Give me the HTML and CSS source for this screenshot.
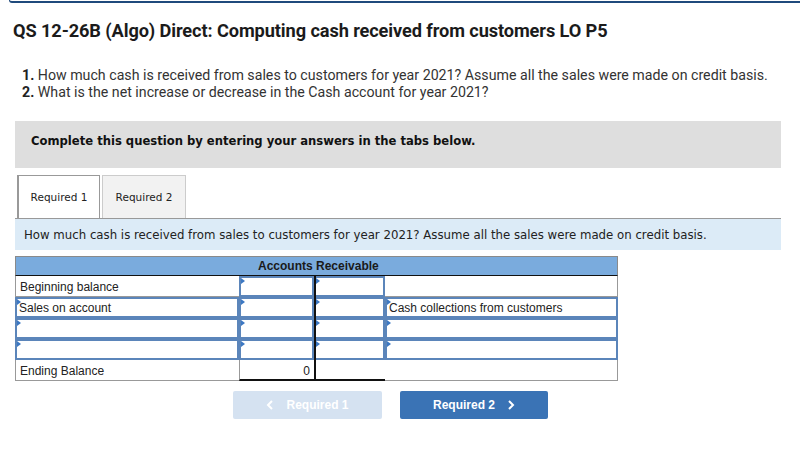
FILE: index.html
```html
<!DOCTYPE html>
<html>
<head>
<meta charset="utf-8">
<link rel="stylesheet" href="styles.css">
</head>
<body>
<div class="topline"></div>
<div class="page">
  <h1 class="title">QS 12-26B (Algo) Direct: Computing cash received from customers LO P5</h1>
  <div class="questions">
    <div class="q"><b>1.</b> How much cash is received from sales to customers for year 2021? Assume all the sales were made on credit basis.</div>
    <div class="q"><b>2.</b> What is the net increase or decrease in the Cash account for year 2021?</div>
  </div>
  <div class="instruct">Complete this question by entering your answers in the tabs below.</div>
  <div class="tabs">
    <div class="tab active">Required 1</div>
    <div class="tab">Required 2</div>
  </div>
  <div class="prompt">How much cash is received from sales to customers for year 2021? Assume all the sales were made on credit basis.</div>
  <div class="taccount">
    <div class="head">Accounts Receivable</div>
    <div class="grid">
      <div class="cell plain lab">Beginning balance</div>
      <div class="cell in"></div>
      <div class="cell in"></div>
      <div class="cell plain last"></div>

      <div class="cell in lab">Sales on account</div>
      <div class="cell in"></div>
      <div class="cell in"></div>
      <div class="cell in">Cash collections from customers</div>

      <div class="cell in lab"></div>
      <div class="cell in"></div>
      <div class="cell in"></div>
      <div class="cell in"></div>

      <div class="cell in lab"></div>
      <div class="cell in"></div>
      <div class="cell in"></div>
      <div class="cell in"></div>

      <div class="cell plain lab endrow">Ending Balance</div>
      <div class="cell plain total">0</div>
      <div class="cell plain total2"></div>
      <div class="cell plain last endrow"></div>
    </div>
  </div>
  <div class="buttons">
    <div class="btn disabled">
      <svg width="8" height="10" viewBox="0 0 8 10"><polyline points="6,1 2,5 6,9" fill="none" stroke="#fff" stroke-width="2"/></svg>
      <span>Required 1</span>
    </div>
    <div class="btn primary">
      <span>Required 2</span>
      <svg width="8" height="10" viewBox="0 0 8 10"><polyline points="2,1 6,5 2,9" fill="none" stroke="#fff" stroke-width="2"/></svg>
    </div>
  </div>
</div>
</body>
</html>
```
FILE: styles.css
```css
html, body {
  margin: 0;
  padding: 0;
  background: #fff;
}
body {
  font-family: "Liberation Sans", Arial, sans-serif;
  color: #222;
}
.topline {
  height: 1px;
  margin-left: 9px;
  border-left: 1px solid #1f4a7c;
  border-bottom: 2px solid #1f4a7c;
  border-bottom-left-radius: 5px;
}
.page {
  padding: 0 19px 0 15px;
}
.title {
  margin: 0 0 0 -2px;
  padding-top: 18px;
  font-family: Roboto, "Liberation Sans", sans-serif;
  font-weight: 700;
  font-size: 18.2px;
  line-height: 20px;
  color: #1b1b1b;
  letter-spacing: -0.1px;
}
.questions {
  margin-top: 26px;
  padding-left: 7px;
  font-family: Roboto, "Liberation Sans", sans-serif;
  font-size: 14.2px;
  line-height: 17px;
  color: #333;
}
.q b {
  font-weight: 700;
  color: #222;
}
.instruct {
  margin-top: 20px;
  background: #dedede;
  height: 47px;
  box-sizing: border-box;
  padding: 12px 0 0 16px;
  font-family: "DejaVu Sans Condensed", "DejaVu Sans", sans-serif;
  font-weight: 700;
  font-size: 12.9px;
  line-height: 16px;
  color: #111;
}
.tabs {
  display: flex;
  gap: 2px;
  margin-top: 7px;
  padding-left: 2px;
}
.tab {
  width: 84px;
  height: 43px;
  box-sizing: border-box;
  border: 1px solid #ccc;
  border-bottom: 0;
  background: #f2f2f2;
  display: flex;
  align-items: center;
  justify-content: center;
  font-family: "DejaVu Sans", Verdana, sans-serif;
  font-size: 10.5px;
  color: #222;
}
.tab.active {
  width: 83px;
  background: #fff;
  border: 1px solid #999;
  border-left-width: 2px;
  border-bottom: 0;
}
.prompt {
  border-top: 1px solid #999;
  background: #dcebf7;
  height: 32px;
  box-sizing: border-box;
  padding: 9px 0 0 9px;
  font-family: "DejaVu Sans", Verdana, sans-serif;
  font-size: 11.75px;
  line-height: 14px;
  color: #222;
}
.taccount {
  margin-top: 6px;
  width: 603px;
}
.head {
  height: 20px;
  box-sizing: border-box;
  background: #7aabdd;
  border-top: 1px solid #8a8a8a;
  border-left: 1px solid #8a8a8a;
  border-right: 1px solid #8a8a8a;
  border-bottom: 1px solid #111;
  width: 603px;
  display: flex;
  align-items: center;
  font-weight: 700;
  font-size: 12px;
  color: #1a1a1a;
  padding-left: 242px;
}
.grid {
  position: relative;
  display: grid;
  grid-template-columns: 224px 75px 71px 233px;
  grid-auto-rows: 21px;
}
.grid::after {
  content: "";
  position: absolute;
  left: 299px;
  top: 0;
  width: 2px;
  height: 105px;
  background: #111;
}
.cell {
  box-sizing: border-box;
  font-size: 12px;
  line-height: 18px;
  color: #222;
  padding-left: 3px;
  white-space: nowrap;
  overflow: hidden;
}
.plain {
  border-bottom: 1px solid #999;
  padding-top: 2px;
}
.plain.lab {
  border-left: 1px solid #999;
  padding-left: 4px;
}
.plain.last {
  border-right: 1px solid #999;
}
.in {
  position: relative;
  border: 2px solid #5b85ba;
  padding-left: 2px;
  padding-top: 0;
}
.in::before {
  content: "";
  position: absolute;
  left: 0;
  top: 0;
  width: 0;
  height: 0;
  border-top: 3px solid transparent;
  border-bottom: 3px solid transparent;
  border-left: 4px solid #3c78c3;
}
.total {
  border-left: 1px solid #999;
  border-bottom: 2px solid #111;
  text-align: right;
  padding-right: 4px;
}
.total2 {
  border-bottom: 2px solid #111;
}
.buttons {
  display: flex;
  gap: 18px;
  margin-top: 10px;
  padding-left: 218px;
}
.btn {
  width: 149px;
  height: 28px;
  border-radius: 2px;
  display: flex;
  align-items: center;
  justify-content: center;
  gap: 12px;
  font-weight: 700;
  font-size: 12px;
  color: #fff;
}
.btn.disabled {
  background: #d5e2f1;
}
.btn.primary {
  width: 148px;
  background: #3a73b5;
}
```
